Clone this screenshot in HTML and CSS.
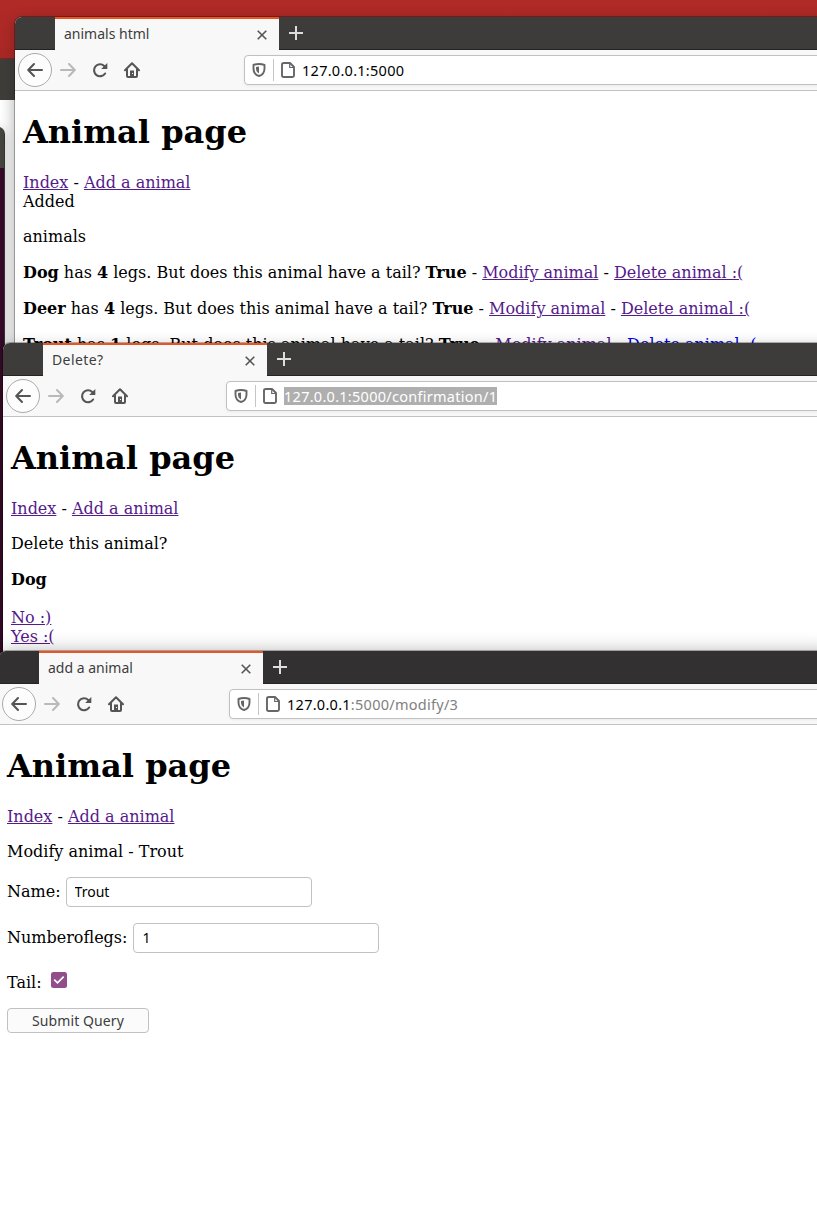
FILE: index.html
```html
<!DOCTYPE html>
<html lang="en">
<head>
<meta charset="utf-8">
<title>Animal page</title>
<link rel="stylesheet" href="styles.css">
</head>
<body>
<svg class="defs" aria-hidden="true">
  <symbol id="back" viewBox="0 0 16 16"><path d="M15 8H1.500M7 2 1.200 8 7 14" fill="none" stroke="currentColor" stroke-width="2" stroke-linecap="round" stroke-linejoin="round"/></symbol>
  <symbol id="forward" viewBox="0 0 16 16"><path d="M1 8h13.500M9 2l5.800 6L9 14" fill="none" stroke="currentColor" stroke-width="2" stroke-linecap="round" stroke-linejoin="round"/></symbol>
  <symbol id="reload" viewBox="0 0 16 16"><path d="M13.100 11.500A6 6 0 1 1 12.200 3.900L14 5.700" fill="none" stroke="currentColor" stroke-width="2.100" stroke-linecap="round"/><path d="M15.300 1v5.600a.5.5 0 0 1-.5.5H9.200z" fill="currentColor"/></symbol>
  <symbol id="home" viewBox="0 0 16 16"><path d="M1 8.200 8 1.200l7 7M3 7.500V14q0 1 1 1h8q1 0 1-1V7.500" fill="none" stroke="currentColor" stroke-width="2" stroke-linecap="round" stroke-linejoin="round"/><path d="M6 8.500h4V14H6z" fill="currentColor"/><path d="M8 11h1v1H8z" fill="#f8f8f8"/></symbol>
  <symbol id="shield" viewBox="0 0 14 14"><path d="M7 1C5 1 3.200 1.300 1.500 2v3.500C1.500 9.400 3.700 12 7 13c3.300-1 5.500-3.600 5.500-7.500V2C10.800 1.300 9 1 7 1z" fill="none" stroke="currentColor" stroke-width="1.900" stroke-linejoin="round"/><path d="M7 3.500v7C5 9.500 4 7.800 4 5.500V3.900Q5.500 3.500 7 3.500z" fill="currentColor"/></symbol>
  <symbol id="page" viewBox="0 0 14 16"><path d="M3 1h6l4 4v8.500Q13 15 11.500 15h-9Q1 15 1 13.500v-11Q1 1 3 1z" fill="none" stroke="currentColor" stroke-width="1.900" stroke-linejoin="round"/><path d="M8.700 1.500v4h4" fill="none" stroke="currentColor" stroke-width="1.200"/></symbol>
  <symbol id="close" viewBox="0 0 10 10"><path d="m.7.7 8.600 8.600M9.300.7.7 9.300" stroke="currentColor" stroke-width="1.600"/></symbol>
  <symbol id="plus" viewBox="0 0 14 14"><path d="M7 0v14M0 7h14" stroke="currentColor" stroke-width="2"/></symbol>
</svg>
<div class="desktop">
  <div class="backdrop"></div>
  <div class="backpage"></div>
  <div class="terminal"></div>

  <section class="window list">
    <div class="tabs"><div class="tab"><span class="title">animals html</span><svg class="close"><use href="#close"/></svg></div><svg class="plus"><use href="#plus"/></svg></div>
    <div class="toolbar">
      <span class="round"><svg class="ico"><use href="#back"/></svg></span><svg class="ico dim"><use href="#forward"/></svg><svg class="ico"><use href="#reload"/></svg><svg class="ico"><use href="#home"/></svg>
      <div class="url"><svg class="shield"><use href="#shield"/></svg><i class="rule"></i><svg class="page"><use href="#page"/></svg><span class="address">127.0.0.1:5000</span></div>
    </div>
    <div class="content">
      <h1>Animal page</h1>
      <div><a href="#">Index</a> - <a href="#">Add a animal</a></div>
      <div>Added</div>
      <p>animals</p>
      <p class="row"><b>Dog</b> has <b>4</b> legs. But does this animal have a tail? <b>True</b> - <a href="#">Modify animal</a> - <a href="#">Delete animal :(</a></p>
      <p class="row"><b>Deer</b> has <b>4</b> legs. But does this animal have a tail? <b>True</b> - <a href="#">Modify animal</a> - <a href="#">Delete animal :(</a></p>
      <p class="row"><b>Trout</b> has <b>1</b> legs. But does this animal have a tail? <b>True</b> - <a href="#">Modify animal</a> - <a href="#" class="fresh">Delete animal :(</a></p>
    </div>
  </section>

  <section class="window confirm">
    <div class="tabs"><div class="tab"><span class="title wide">Delete?</span><svg class="close"><use href="#close"/></svg></div><svg class="plus"><use href="#plus"/></svg></div>
    <div class="toolbar">
      <span class="round"><svg class="ico"><use href="#back"/></svg></span><svg class="ico dim"><use href="#forward"/></svg><svg class="ico"><use href="#reload"/></svg><svg class="ico"><use href="#home"/></svg>
      <div class="url"><svg class="shield"><use href="#shield"/></svg><i class="rule"></i><svg class="page"><use href="#page"/></svg><span class="address selected">127.0.0.1:5000/confirmation/1</span></div>
    </div>
    <div class="content">
      <h1>Animal page</h1>
      <div><a href="#">Index</a> - <a href="#">Add a animal</a></div>
      <p>Delete this animal?</p>
      <p class="row"><b>Dog</b></p>
      <div class="answers"><a href="#">No :)</a><br><a href="#">Yes :(</a></div>
    </div>
  </section>

  <section class="window modify">
    <div class="tabs"><div class="tab"><span class="title">add a animal</span><svg class="close"><use href="#close"/></svg></div><svg class="plus"><use href="#plus"/></svg></div>
    <div class="toolbar">
      <span class="round"><svg class="ico"><use href="#back"/></svg></span><svg class="ico dim"><use href="#forward"/></svg><svg class="ico"><use href="#reload"/></svg><svg class="ico"><use href="#home"/></svg>
      <div class="url"><svg class="shield"><use href="#shield"/></svg><i class="rule"></i><svg class="page"><use href="#page"/></svg><span class="address">127.0.0.1<span class="path">:5000/modify/3</span></span></div>
    </div>
    <div class="content">
      <h1>Animal page</h1>
      <div><a href="#">Index</a> - <a href="#">Add a animal</a></div>
      <p>Modify animal - Trout</p>
      <form>
        <label class="field"><span class="name">Name:</span><input value="Trout"></label>
        <label class="field legs"><span class="name">Numberoflegs:</span><input value="1"></label>
        <label class="check">Tail: <svg class="box" viewBox="0 0 16 16"><rect width="16" height="16" rx="2.500" fill="#924d8b"/><path d="m3.200 7.600 3.300 3.300 6.200-6.300" fill="none" stroke="#fff" stroke-width="1.700"/></svg></label>
        <button type="button">Submit Query</button>
      </form>
    </div>
  </section>
</div>
</body>
</html>
```

FILE: styles.css
```css
* { box-sizing: border-box; }
body { margin: 0; font: 16px/19px "DejaVu Serif", serif; color: #000; }
.defs { position: absolute; width: 0; height: 0; }
.desktop { position: relative; width: 817px; height: 1208px; overflow: hidden; background: #fff; }
.backdrop { position: absolute; left: 0; top: 0; width: 817px; height: 100px; background: linear-gradient(#b02a27 0 8px, #a82825 58px, #7d2421 58px, #3f3d3a 60px); }
.backpage { position: absolute; left: 0; top: 100px; width: 15px; height: 250px; background: linear-gradient(90deg, #fff, #eee); }
.terminal { position: absolute; left: -20px; top: 127px; width: 25px; height: 540px; border-right: 1px solid #333; border-radius: 0 7px 0 0; background: linear-gradient(#444340 41px, #350a27 41px); box-shadow: 0 2px 12px rgba(0,0,0,.2); }

.window { position: absolute; background: #fff; border-radius: 7px 7px 0 0; box-shadow: 0 0 0 1px rgba(0,0,0,.28), 0 2px 14px rgba(0,0,0,.22); }
.list { left: 15px; top: 17px; width: 822px; height: 340px; }
.confirm { left: 3px; top: 343px; width: 834px; height: 320px; }
.modify { left: -1px; top: 651px; width: 838px; height: 580px; box-shadow: 0 0 0 1px rgba(0,0,0,.28), 0 2px 20px rgba(0,0,0,.35); }
.tabs { display: flex; align-items: center; height: 33px; padding-left: 40px; background: #3e3c3a; border-bottom: 1px solid #252423; border-radius: 7px 7px 0 0; }
.modify .tabs { background: #323031; }
.tab { display: flex; align-items: center; justify-content: space-between; width: 224px; height: 33px; margin-bottom: -1px; padding: 0 12px 0 9px; background: #f8f8f8; border-top: 2px solid #e95420; }
.title, .address, input, button { font-family: "Noto Sans", sans-serif; }
.title { padding-bottom: 2px; font-size: 14px; color: #3d3d3d; white-space: nowrap; }
.wide { letter-spacing: .4px; }
.close { width: 10px; height: 10px; color: #555; }
.plus { width: 14px; height: 14px; margin-left: 10px; color: #ddd; }
.toolbar { display: flex; align-items: center; height: 41px; padding-left: 3px; background: #f8f8f8; border-bottom: 1px solid #c2c2c2; }
.ico { flex: none; width: 16px; height: 16px; margin-right: 16px; color: #555; }
.dim { color: #b9b9b9; }
.round { display: flex; flex: none; align-items: center; justify-content: center; width: 34px; height: 34px; margin-right: 8px; border: 1px solid #aaa; border-radius: 50%; background: #fdfdfd; }
.round .ico { margin: 0; }
.url { display: flex; align-items: center; width: 650px; height: 30px; margin-left: 88px; padding-left: 7px; background: #fff; border: 1px solid #c1c1c1; border-radius: 4px; box-shadow: 0 1px 3px rgba(0,0,0,.06); }
.confirm .url { margin-left: 82px; }
.modify .url { margin-left: 89px; }
.shield { width: 14px; height: 14px; color: #666; }
.rule { width: 1px; height: 22px; margin: 0 7px; background: #c5c5c5; }
.page { width: 14px; height: 16px; margin-right: 7px; color: #666; }
.address { font-size: 14.5px; line-height: 18px; letter-spacing: .27px; white-space: nowrap; }
.path { color: #808080; }
.selected { background: #afafaf; color: #fff; }

.content { padding: 22px 8px 0; white-space: nowrap; }
h1 { margin: 0 0 22px; font-size: 32px; line-height: 38px; }
p { margin: 16px 0 0; }
.row { margin-top: 17px; }
a { color: #551a8b; }
.fresh { color: #0000ee; }
.answers { margin-top: 19px; }
form { display: flex; flex-direction: column; align-items: flex-start; padding-top: 16px; }
.field { display: flex; align-items: center; gap: 5px; height: 30px; margin-bottom: 16px; }
.legs { gap: 6px; }
.name { padding-bottom: 2px; }
input { width: 246px; height: 30px; padding: 0 8px 2px; font-size: 14px; color: #000; background: #fff; border: 1px solid #c1c1c1; border-radius: 4px; }
.check { display: flex; align-items: center; gap: 9px; height: 23px; margin-bottom: 16px; padding-top: 3px; }
.box { width: 16px; height: 16px; margin-top: -4px; }
button { width: 142px; height: 25px; padding: 0; font-size: 14px; letter-spacing: .1px; color: #3d3d3d; background: #fbfbfb; border: 1px solid #c1c1c1; border-radius: 4px; }
```
